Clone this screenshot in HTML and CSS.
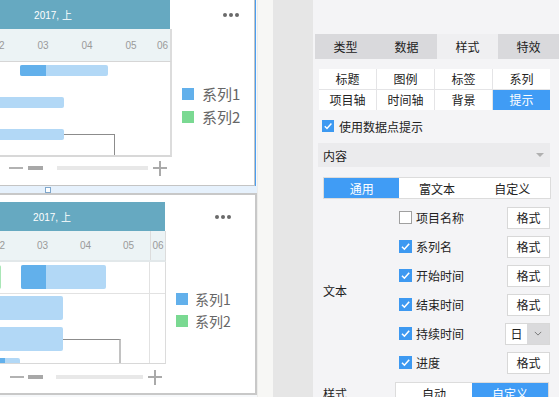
FILE: index.html
```html
<!DOCTYPE html>
<html lang="zh-CN">
<head>
  <meta charset="UTF-8" />
  <title>甘特图 - 样式</title>
  <link rel="stylesheet" href="styles.css">
</head>
<body>
  <div class="app">
    <div class="canvas">
      <div class="widget widget-top">
        <div class="gantt">
          <div class="gantt-head">2017, 上</div>
          <div class="gantt-axis">
            <span class="tick first"></span>
            <span class="tick">02</span>
            <span class="tick">03</span>
            <span class="tick">04</span>
            <span class="tick">05</span>
            <span class="tick last">06</span>
          </div>
          <div class="gantt-body">
            <div class="gantt-row">
              <div class="bar" style="margin-left:84px;width:88px"><span class="bar-done" style="width:26px"></span></div>
            </div>
            <div class="gantt-row">
              <div class="bar" style="margin-left:34px;width:94px"></div>
            </div>
            <div class="gantt-row">
              <div class="bar linked" style="margin-left:34px;width:94px"></div>
            </div>
          </div>
          <div class="zoom-bar">
            <span class="zoom-out"></span>
            <span class="zoom-level"></span>
            <span class="zoom-track"></span>
            <span class="zoom-in"></span>
          </div>
        </div>
        <div class="widget-side">
          <div class="more"><i></i><i></i><i></i></div>
          <ul class="legend">
            <li><span class="swatch s1"></span>系列1</li>
            <li><span class="swatch s2"></span>系列2</li>
          </ul>
        </div>
      </div>

      <div class="canvas-gap"><span class="resize-handle"></span></div>

      <div class="widget widget-bottom">
        <div class="gantt">
          <div class="gantt-head">2017, 上</div>
          <div class="gantt-axis">
            <span class="tick first"></span>
            <span class="tick">02</span>
            <span class="tick">03</span>
            <span class="tick">04</span>
            <span class="tick">05</span>
            <span class="tick last">06</span>
          </div>
          <div class="gantt-body">
            <div class="gantt-row split">
              <div class="bar green" style="margin-left:20px;width:42px"></div>
              <div class="bar" style="margin-left:20px;width:85px"><span class="bar-done" style="width:25px"></span></div>
            </div>
            <div class="gantt-row">
              <div class="bar" style="margin-left:40px;width:84px"></div>
            </div>
            <div class="gantt-row">
              <div class="bar linked" style="margin-left:40px;width:84px"></div>
            </div>
            <div class="gantt-row">
              <div class="bar" style="margin-left:50px;width:31px"><span class="bar-done" style="width:16px"></span></div>
            </div>
          </div>
          <div class="zoom-bar">
            <span class="zoom-out"></span>
            <span class="zoom-level"></span>
            <span class="zoom-track"></span>
            <span class="zoom-in"></span>
          </div>
        </div>
        <div class="widget-side">
          <div class="more"><i></i><i></i><i></i></div>
          <ul class="legend">
            <li><span class="swatch s1"></span>系列1</li>
            <li><span class="swatch s2"></span>系列2</li>
          </ul>
        </div>
      </div>
    </div>

    <div class="rail"></div>
    <div class="dock"></div>

    <aside class="panel">
      <div class="tabs">
        <span>类型</span>
        <span>数据</span>
        <span class="active">样式</span>
        <span>特效</span>
      </div>

      <div class="subtabs">
        <span>标题</span>
        <span>图例</span>
        <span>标签</span>
        <span>系列</span>
        <span>项目轴</span>
        <span>时间轴</span>
        <span>背景</span>
        <span class="active">提示</span>
      </div>

      <label class="check-line">
        <span class="cb on"><svg viewBox="0 0 13 13"><path d="M3 6.8l2.4 2.4L10.2 3.8" /></svg></span>
        使用数据点提示
      </label>

      <div class="section-head">
        <span>内容</span>
        <span class="caret"></span>
      </div>

      <div class="segmented">
        <span class="active">通用</span>
        <span>富文本</span>
        <span>自定义</span>
      </div>

      <div class="form">
        <div class="form-label">文本</div>
        <div class="form-rows">
          <div class="form-row">
            <span class="cb"></span>项目名称
            <span class="btn">格式</span>
          </div>
          <div class="form-row">
            <span class="cb on"><svg viewBox="0 0 13 13"><path d="M3 6.8l2.4 2.4L10.2 3.8" /></svg></span>系列名
            <span class="btn">格式</span>
          </div>
          <div class="form-row">
            <span class="cb on"><svg viewBox="0 0 13 13"><path d="M3 6.8l2.4 2.4L10.2 3.8" /></svg></span>开始时间
            <span class="btn">格式</span>
          </div>
          <div class="form-row">
            <span class="cb on"><svg viewBox="0 0 13 13"><path d="M3 6.8l2.4 2.4L10.2 3.8" /></svg></span>结束时间
            <span class="btn">格式</span>
          </div>
          <div class="form-row">
            <span class="cb on"><svg viewBox="0 0 13 13"><path d="M3 6.8l2.4 2.4L10.2 3.8" /></svg></span>持续时间
            <span class="select">
              <span class="select-value">日</span>
              <span class="select-arrow"><svg viewBox="0 0 10 6"><path d="M1 1l4 4 4-4" /></svg></span>
            </span>
          </div>
          <div class="form-row">
            <span class="cb on"><svg viewBox="0 0 13 13"><path d="M3 6.8l2.4 2.4L10.2 3.8" /></svg></span>进度
            <span class="btn">格式</span>
          </div>
        </div>
      </div>

      <div class="style-row">
        <div class="form-label">样式</div>
        <div class="segmented small">
          <span>自动</span>
          <span class="active">自定义</span>
        </div>
      </div>
    </aside>
  </div>
</body>
</html>
```

FILE: styles.css
```css
* {
  box-sizing: border-box;
}
html, body {
  margin: 0;
}
body {
  width: 559px;
  height: 397px;
  overflow: hidden;
  background: #f4f4f6;
  color: #222;
  font-family: "Noto Sans CJK SC", "Noto Sans", sans-serif;
  font-size: 12px;
}
ul {
  margin: 0;
  padding: 0;
  list-style: none;
}
.app {
  display: flex;
  height: 397px;
}

/* canvas with the two chart widgets */
.canvas {
  width: 257px;
  flex-shrink: 0;
  display: flex;
  flex-direction: column;
  background: #f6f8fa;
}
.widget {
  display: flex;
  background: #fff;
  overflow: hidden;
}
.widget-top {
  width: 255px;
  height: 186px;
  border-right: 1px solid #c4c4c4;
  border-bottom: 1px solid #c4c4c4;
  outline: 1px solid #4a9ef0;
}
.widget-bottom {
  width: 257px;
  height: 202px;
  border: 2px solid #c8c8c8;
  border-left: none;
}
.canvas-gap {
  height: 7px;
  background: #e6f1fc;
}
.resize-handle {
  display: block;
  width: 6px;
  height: 6px;
  margin: 1px 0 0 45px;
  background: #fff;
  border: 1px solid #7fa7cc;
}

.gantt {
  flex-shrink: 0;
  display: flex;
  flex-direction: column;
}
.widget-top .gantt {
  width: 236px;
  margin-left: -64px;
}
.widget-bottom .gantt {
  width: 227px;
  margin-left: -61px;
  padding-top: 7px;
}
.gantt-head {
  height: 29px;
  margin-right: 2px;
  background: #66a9c1;
  color: #fff;
  font-family: "Liberation Sans", "Noto Sans CJK SC", sans-serif;
  font-size: 10px;
  display: flex;
  align-items: center;
  justify-content: center;
}
.widget-bottom .gantt-head {
  margin-right: 1px;
}
.gantt-axis {
  display: flex;
  align-items: center;
  height: 33px;
  background: #ecf3f5;
  border-right: 2px solid #dcdcdc;
  border-bottom: 1px solid #d6d6d6;
  color: #9a9a9a;
  font-family: "Liberation Sans", sans-serif;
  font-size: 10px;
}
.widget-bottom .gantt-axis {
  height: 31px;
  border-right-width: 1px;
  border-bottom: 2px solid #e2e8ea;
}
.tick {
  width: 44px;
  flex-shrink: 0;
  text-align: center;
}
.tick.first {
  margin-left: -3px;
}
.tick.last {
  flex: 1;
  text-align: right;
  padding-right: 2px;
}
.widget-bottom .tick {
  width: 43px;
}
.widget-bottom .tick.first {
  margin-left: -4px;
}
.widget-bottom .tick.last {
  align-self: stretch;
  display: flex;
  align-items: center;
  justify-content: center;
  padding: 0;
  border-left: 1px solid #dcdcdc;
}

.gantt-body {
  height: 95px;
  overflow: hidden;
  border-right: 2px solid #dcdcdc;
  border-bottom: 2px solid #d8d8d8;
}
.widget-bottom .gantt-body {
  height: 102px;
  border-right-width: 1px;
  border-bottom-width: 1px;
  background: linear-gradient(to right, transparent 210px, #e2e2e2 210px, #e2e2e2 211px, transparent 211px);
}
.gantt-row {
  display: flex;
  height: 32px;
  padding-top: 3px;
}
.widget-bottom .gantt-row {
  height: 31px;
  padding-top: 2px;
}
.widget-bottom .gantt-row.split {
  height: 32px;
  padding-top: 3px;
  border-bottom: 1px solid #e2e2e2;
}
.bar {
  position: relative;
  height: 11px;
  border-radius: 2px;
  background: #b2d8f6;
  flex-shrink: 0;
}
.widget-bottom .bar {
  height: 24px;
}
.bar.green {
  background: #a9e6b6;
}
.bar-done {
  display: block;
  height: 100%;
  border-radius: 2px 0 0 2px;
  background: #62b0eb;
}
.bar.linked::after {
  content: "";
  position: absolute;
  left: 100%;
  top: 5px;
  width: 50px;
  height: 40px;
  border-top: 1px solid #8c8c8c;
  border-right: 1px solid #8c8c8c;
}
.widget-bottom .bar.linked::after {
  top: 12px;
  width: 56px;
  border-right: 2px solid #c2c2c2;
}

.zoom-bar {
  display: flex;
  align-items: center;
  height: 22px;
  padding-left: 73px;
}
.widget-bottom .zoom-bar {
  height: 26px;
  padding-left: 71px;
}
.zoom-out {
  width: 14px;
  height: 2px;
  background: #b2b2b2;
}
.zoom-level {
  width: 15px;
  height: 4px;
  margin-left: 5px;
  background: #a8a8a8;
}
.zoom-track {
  width: 91px;
  height: 4px;
  margin-left: 14px;
  background: #e8e8e8;
}
.widget-bottom .zoom-level {
  margin-left: 4px;
}
.widget-bottom .zoom-track {
  width: 87px;
  margin-left: 13px;
}
.zoom-in {
  width: 14px;
  height: 15px;
  margin-left: 5px;
  background:
    linear-gradient(#aaa, #aaa) center / 14px 2px no-repeat,
    linear-gradient(#aaa, #aaa) center / 2px 15px no-repeat;
}

.widget-side {
  flex: 1;
  display: flex;
  flex-direction: column;
}
.more {
  align-self: flex-end;
  display: flex;
  gap: 2px;
  margin: 13px 15px 0 0;
}
.widget-bottom .more {
  margin: 20px 24px 0 0;
}
.more i {
  width: 4px;
  height: 4px;
  border-radius: 50%;
  background: #6a6a6a;
}
.legend {
  margin: 65px 0 0 10px;
  color: #666;
  font-size: 15px;
}
.widget-bottom .legend {
  margin-top: 69px;
  font-size: 14px;
}
.legend li {
  display: flex;
  align-items: center;
  height: 23px;
}
.widget-bottom .legend li {
  height: 22px;
}
.swatch {
  width: 12px;
  height: 12px;
  margin-right: 8px;
}
.widget-bottom .swatch {
  margin-right: 7px;
}
.s1 {
  background: #62b0eb;
}
.s2 {
  background: #7ad992;
}

.rail {
  width: 16px;
  flex-shrink: 0;
  background: #f7f7f5;
  border-left: 1px solid #ececea;
}
.dock {
  width: 40px;
  flex-shrink: 0;
  background: #e6e6e6;
}

/* property panel */
.panel {
  flex: 1;
  padding-top: 34px;
}
.tabs {
  display: flex;
  height: 25px;
  margin-left: 2px;
  background: #d9d9dc;
}
.tabs span {
  flex: 1;
  line-height: 25px;
  text-align: center;
}
.tabs .active {
  background: #efeff1;
}
.subtabs {
  display: grid;
  grid-template-columns: repeat(4, 1fr);
  gap: 1px;
  margin: 10px 9px 0 6px;
  background: #e4e4e6;
}
.subtabs span {
  height: 20px;
  line-height: 20px;
  text-align: center;
  background: #fff;
}
.subtabs .active {
  background: #409cf5;
  color: #fff;
}
.check-line {
  display: flex;
  align-items: center;
  gap: 5px;
  height: 12px;
  margin: 10px 0 0 9px;
}
.cb {
  width: 13px;
  height: 13px;
  flex-shrink: 0;
  border: 1px solid #a0a0a0;
  background: #fff;
}
.cb.on {
  border: none;
  background: #3d99f1;
}
.cb svg {
  display: block;
  width: 13px;
  height: 13px;
  fill: none;
  stroke: #fff;
  stroke-width: 1.6;
}
.check-line .cb {
  width: 12px;
  height: 12px;
}
.check-line .cb svg {
  width: 12px;
  height: 12px;
}
.section-head {
  display: flex;
  align-items: center;
  justify-content: space-between;
  height: 24px;
  margin: 11px 9px 0 5px;
  padding: 0 6px 0 5px;
  background: #ebebed;
}
.caret {
  width: 0;
  height: 0;
  border-left: 4px solid transparent;
  border-right: 4px solid transparent;
  border-top: 4px solid #b0b0b0;
}
.segmented {
  display: flex;
  height: 22px;
  margin: 10px 8px 0 10px;
  border: 1px solid #dcdcdc;
  background: #fff;
}
.segmented span {
  flex: 1;
  display: flex;
  align-items: center;
  justify-content: center;
}
.segmented .active {
  background: #409cf5;
  color: #fff;
}
.form {
  display: flex;
  margin: 4px 9px 0 10px;
}
.form-label {
  width: 76px;
  flex-shrink: 0;
  display: flex;
  align-items: center;
}
.form-rows {
  flex: 1;
}
.form-row {
  display: flex;
  align-items: center;
  height: 29px;
}
.form-row .cb {
  margin-right: 4px;
}
.btn {
  width: 43px;
  height: 22px;
  margin-left: auto;
  display: flex;
  align-items: center;
  justify-content: center;
  background: #fff;
  border: 1px solid #d8d8d8;
}
.select {
  display: flex;
  width: 45px;
  height: 22px;
  margin-left: auto;
  border: 1px solid #d8d8d8;
  background: #fff;
}
.select-value {
  width: 21px;
  display: flex;
  align-items: center;
  justify-content: center;
}
.select-arrow {
  flex: 1;
  display: flex;
  align-items: center;
  justify-content: center;
  background: #dadadc;
}
.select-arrow svg {
  width: 8px;
  height: 5px;
  fill: none;
  stroke: #777;
  stroke-width: 1.2;
}
.style-row {
  display: flex;
  margin: 5px 10px 0 10px;
}
.style-row .form-label {
  width: 72px;
}
.segmented.small {
  flex: 1;
  margin: 0;
}
```
